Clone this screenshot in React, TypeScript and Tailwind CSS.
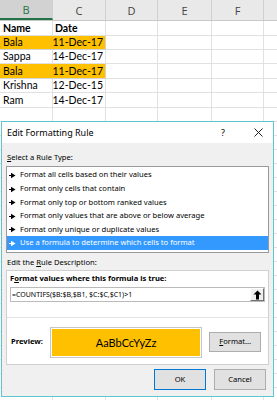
import React from "react";

const cols = [
  { w: "w-[53px]", l: "B" },
  { w: "w-[53px]", l: "C" },
  { w: "w-[52px]", l: "D" },
  { w: "w-[54px]", l: "E" },
  { w: "w-[52px]", l: "F" },
  { w: "w-[13px]", l: "" },
];

const data: { name: string; date: string; hl: boolean; bold?: boolean }[] = [
  { name: "Name", date: "Date", hl: false, bold: true },
  { name: "Bala", date: "11-Dec-17", hl: true },
  { name: "Sappa", date: "14-Dec-17", hl: false },
  { name: "Bala", date: "11-Dec-17", hl: true },
  { name: "Krishna", date: "12-Dec-15", hl: false },
  { name: "Ram", date: "14-Dec-17", hl: false },
];

const heights = ["h-[15px]", "h-[14px]", "h-[14px]", "h-[15px]", "h-[14px]", "h-[15px]", "h-[14px]"];

function Arrow({ white }: { white?: boolean }) {
  return (
    <svg width="7" height="7" viewBox="0 0 7 7" className="shrink-0">
      <path d="M0 3.5H3" stroke={white ? "#fff" : "#000"} strokeWidth="1" />
      <path d="M2 0.8L6.5 3.5L2 6.2Z" fill={white ? "#fff" : "#000"} />
    </svg>
  );
}

const rules = [
  "Format all cells based on their values",
  "Format only cells that contain",
  "Format only top or bottom ranked values",
  "Format only values that are above or below average",
  "Format only unique or duplicate values",
  "Use a formula to determine which cells to format",
];
const ruleH = ["h-[14px]", "h-[14px]", "h-[13px]", "h-[14px]", "h-[13px]", "h-[14px]"];

export default function App() {
  const rows = [];
  for (let i = 0; i < 27; i++) {
    const d = data[i];
    const h = heights[i] ?? "h-[14px]";
    rows.push(
      <div key={i} className={`flex ${h} whitespace-nowrap`}>
        {d && d.hl ? (
          <div className="w-[106px] flex bg-[#ffc000] border-b border-[#d4d4d4]">
            <div className="w-[53px] pl-[3px] flex items-center">{d.name}</div>
            <div className="w-[53px] pr-[2px] flex items-center justify-end border-r border-[#d4d4d4]">{d.date}</div>
          </div>
        ) : (
          <>
            <div className={`w-[53px] pl-[3px] flex items-center border-r border-b border-[#e1e1e1] ${d?.bold ? "font-bold" : ""}`}>
              {d?.name}
            </div>
            <div
              className={`w-[53px] flex items-center border-r border-b border-[#e1e1e1] ${
                d?.bold ? "font-bold pl-[2px]" : "justify-end pr-[2px]"
              }`}
            >
              {d?.date}
            </div>
          </>
        )}
        <div className="w-[52px] border-r border-b border-[#e1e1e1]" />
        <div className="w-[54px] border-r border-b border-[#e1e1e1]" />
        <div className="w-[52px] border-r border-b border-[#e1e1e1]" />
        <div className="w-[13px] border-b border-[#e1e1e1]" />
      </div>
    );
  }

  return (
    <div className="relative w-[277px] h-[400px] overflow-hidden bg-white text-black">
      <div className="text-[10.5px] font-['Lato',sans-serif] leading-none">
        <div className="flex h-[21px] bg-[#e9e9e9] border-b border-[#c8c8c8]">
          {cols.map((c, i) => (
            <div
              key={i}
              className={`${c.w} flex items-center justify-center ${i < 5 ? "border-r border-[#d0d0d0]" : ""} ${
                i === 0 ? "bg-[#d2d2d2] text-[#217346] border-b-2 border-b-[#217346]" : "text-[#444]"
              } text-[11px] font-['Open_Sans',sans-serif]`}
            >
              {c.l}
            </div>
          ))}
        </div>
        {rows}
      </div>

      {/* Dialog */}
      <div className="absolute left-[1px] top-[121px] w-[273px] h-[276px] border border-[#5fc5cc] bg-[#f0f0f0] flex flex-col font-['Noto_Sans',sans-serif] text-black leading-none whitespace-nowrap">
        <div className="h-[21px] bg-white flex items-center pl-[5px] pr-[10px] text-[9px]">
          <span className="flex-1">Edit Formatting Rule</span>
          <span className="w-[10px] text-center mr-[26px] text-[9px]">?</span>
          <svg width="9" height="9" viewBox="0 0 9 9">
            <path d="M0.5 0.5L8.5 8.5M8.5 0.5L0.5 8.5" stroke="#222" strokeWidth="1" />
          </svg>
        </div>
        <div className="px-[4px] flex flex-col text-[7.6px]">
          <div className="h-[23px] flex items-end pb-[4px] pl-[1px]">
            <span>
              <span className="underline">S</span>elect a Rule Type:
            </span>
          </div>
          <div className="h-[87px] bg-white border border-[#9a9a9a] pt-[1px] flex flex-col">
            {rules.map((r, i) => (
              <div
                key={i}
                className={`${ruleH[i]} flex items-center gap-[4px] pl-[2px] ${i === 5 ? "bg-[#3399ff] text-white" : ""}`}
              >
                <Arrow white={i === 5} />
                <span>{r}</span>
              </div>
            ))}
          </div>
          <div className="h-[17px] flex items-end pb-[3px] pl-[1px]">
            <span>
              Edit the <span className="underline">R</span>ule Description:
            </span>
          </div>
          <div className="h-[95px] bg-white border border-[#d0d0d0] flex flex-col">
            <div className="h-[47px] flex flex-col px-[3px] border-b border-[#e3e3e3]">
              <div className="h-[16px] flex items-center font-bold">
                <span>
                  F<span className="underline">o</span>rmat values where this formula is true:
                </span>
              </div>
              <div className="h-[15px] border border-[#bababa] flex items-center">
                <span className="flex-1 pl-[1px] text-[7px]">=COUNTIFS($B:$B,$B1, $C:$C,$C1)&gt;1</span>
                <div className="w-[14px] h-[13px] bg-[#f0f0f0] border-r border-b border-[#707070] border-t border-l border-t-white border-l-white flex items-center justify-center">
                  <svg width="9" height="10" viewBox="0 0 9 10">
                    <path d="M4.5 0.5L8.5 4.5H6V9.5H3V4.5H0.5Z" fill="#000" />
                  </svg>
                </div>
              </div>
            </div>
            <div className="flex-1 flex items-center pl-[4px] pr-[7px] pt-[2px]">
              <span className="font-bold w-[39px]">Preview:</span>
              <div className="w-[154px] h-[31px] border border-[#c6c6c6] p-[1px] bg-white">
                <div className="w-full h-full bg-[#ffc000] flex items-center justify-center text-[11px] font-['Lato',sans-serif]">
                  AaBbCcYyZz
                </div>
              </div>
              <div className="ml-[7px] w-[52px] h-[20px] bg-[#e1e1e1] border border-[#adadad] flex items-center justify-center">
                <span>
                  <span className="underline">F</span>ormat...
                </span>
              </div>
            </div>
          </div>
          <div className="flex justify-end gap-[8px] pt-[4px] pr-[3px]">
            <div className="w-[52px] h-[21px] bg-[#e1e1e1] border border-[#0078d7] flex items-center justify-center">OK</div>
            <div className="w-[52px] h-[21px] bg-[#e1e1e1] border border-[#adadad] flex items-center justify-center">Cancel</div>
          </div>
        </div>
      </div>
    </div>
  );
}
